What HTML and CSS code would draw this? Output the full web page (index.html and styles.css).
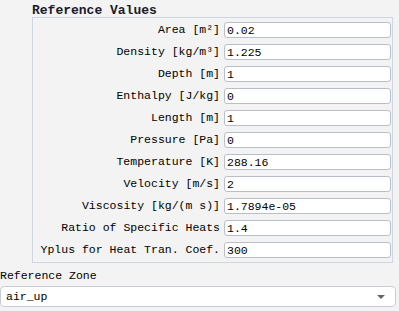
FILE: index.html
```html
<!DOCTYPE html>
<html lang="en">
<head>
  <meta charset="UTF-8" />
  <title>Reference Values</title>
  <link rel="stylesheet" href="styles.css">
</head>
<body>

  <div class="group">
    <div class="group-title">Reference Values</div>
    <div class="group-box">
      <label>Area [m&sup2;]</label><input class="field" value="0.02" />
      <label>Density [kg/m&sup3;]</label><input class="field" value="1.225" />
      <label>Depth [m]</label><input class="field" value="1" />
      <label>Enthalpy [J/kg]</label><input class="field" value="0" />
      <label>Length [m]</label><input class="field" value="1" />
      <label>Pressure [Pa]</label><input class="field" value="0" />
      <label>Temperature [K]</label><input class="field" value="288.16" />
      <label>Velocity [m/s]</label><input class="field" value="2" />
      <label>Viscosity [kg/(m s)]</label><input class="field" value="1.7894e-05" />
      <label>Ratio of Specific Heats</label><input class="field" value="1.4" />
      <label>Yplus for Heat Tran. Coef.</label><input class="field" value="300" />
    </div>
  </div>

  <div class="zone-label">Reference Zone</div>
  <div class="dropdown">
    <span>air_up</span>
    <span class="arrow"></span>
  </div>

</body>
</html>
```

FILE: styles.css
```css
body {
  margin: 0;
  background: #f3f3f3;
  color: #000;
  font-family: "Liberation Mono", "DejaVu Sans Mono", monospace;
  font-size: 11.5px;
}
.group {
  margin-left: 32px;
  width: 361px;
}
.group-title {
  font-size: 13px;
  font-weight: bold;
  line-height: 13px;
  padding-top: 4px;
  height: 13px;
  color: #1a1a2a;
}
.group-box {
  border: 1px solid #cfd6e2;
  display: grid;
  grid-template-columns: 187px 167px;
  column-gap: 4px;
  row-gap: 6px;
  padding: 4px 0 4px 0;
  align-items: center;
}
.group-box label {
  text-align: right;
  line-height: 16px;
  white-space: nowrap;
}
.field {
  box-sizing: border-box;
  height: 16px;
  width: 167px;
  margin: 0;
  padding: 0 2px;
  border: 1px solid #b9bec8;
  border-radius: 3px;
  background: #fff;
  font-family: inherit;
  font-size: 11.5px;
  color: #000;
  outline: none;
}
.zone-label {
  margin-top: 6px;
  line-height: 14px;
}
.dropdown {
  box-sizing: border-box;
  margin-top: 3px;
  width: 396px;
  height: 21px;
  border: 1px solid #c8ccd5;
  border-radius: 4px;
  background: #fff;
  display: flex;
  align-items: center;
  justify-content: space-between;
  padding: 0 10px 0 5px;
}
.arrow {
  width: 0;
  height: 0;
  border-left: 4px solid transparent;
  border-right: 4px solid transparent;
  border-top: 4px solid #666;
}
```
